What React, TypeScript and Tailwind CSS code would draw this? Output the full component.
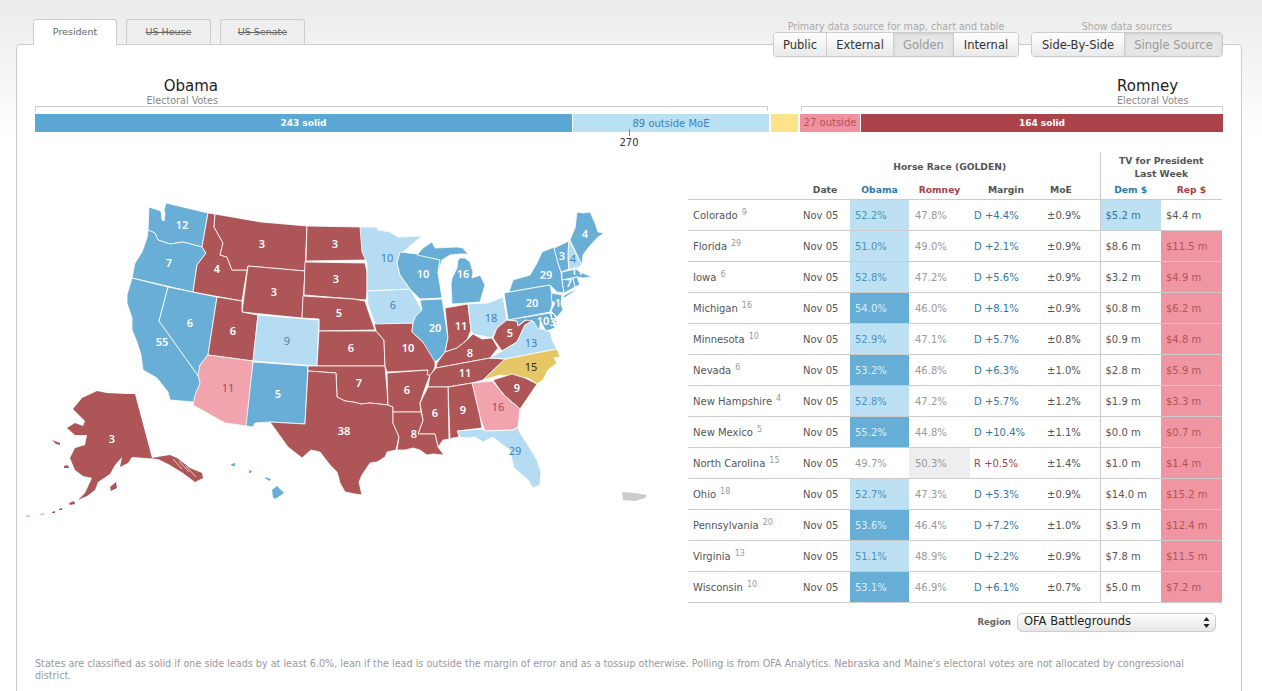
const BLUE = "#68aed6";
const LIGHT = "#b5dcf3";
const RED = "#ae5558";
const PINK = "#f1a3ae";
const GOLD = "#e6c765";

const states: { pts: string; fill: string }[] = [
  { fill: BLUE, pts: "149,207 155,209 161,211 162,220 164,221 165,214 164,210 166,203 208,213 202,247 183,242 170,244 158,240 155,233 148,230" },
  { fill: BLUE, pts: "148,230 155,233 158,240 170,244 183,242 202,247 206,253 197,265 193,292 132,278 135,263 142,252 147,238" },
  { fill: BLUE, pts: "132,278 168,287 159,321 199,377 201,385 196,395 194,402 170,400 168,392 157,378 143,370 141,355 137,342 132,330 132,318 127,303 127,295" },
  { fill: BLUE, pts: "168,287 217,297 208,355 200,365 199,377 159,321" },
  { fill: RED, pts: "208,213 215,214 214,227 223,243 220,255 227,257 232,270 247,270 242,301 193,292 197,265 206,253 202,247" },
  { fill: RED, pts: "215,214 261,222 307,226 305,271 248,266 247,270 232,270 227,257 220,255 223,243 214,227" },
  { fill: RED, pts: "248,266 305,271 302,318 242,312" },
  { fill: RED, pts: "307,226 361,227 366,260 306,261" },
  { fill: RED, pts: "305,262 365,263 367,272 367,292 366,300 353,299 304,295" },
  { fill: RED, pts: "303,296 353,299 365,301 369,313 375,330 319,331 319,319 302,318" },
  { fill: RED, pts: "217,297 242,301 242,312 258,315 253,361 208,355" },
  { fill: LIGHT, pts: "258,315 319,320 317,366 253,361" },
  { fill: RED, pts: "319,331 376,331 384,340 385,366 317,366" },
  { fill: PINK, pts: "208,355 253,361 247,426 225,423 193,405 195,395 200,383 198,375 200,365" },
  { fill: BLUE, pts: "253,362 308,366 305,424 270,422 255,423 253,427 246,426" },
  { fill: RED, pts: "308,366 385,366 387,389 388,405 379,404 370,403 361,404 353,402 345,401 337,397 336,373 308,371" },
  { fill: RED, pts: "308,371 336,373 337,397 345,401 353,402 361,404 370,403 379,404 388,405 393,407 393,423 399,437 396,450 387,452 385,457 377,462 370,463 362,475 359,482 362,495 355,494 345,492 340,483 337,472 330,465 320,452 311,450 302,458 288,447 270,422 305,424" },
  { fill: RED, pts: "387,373 427,370 430,375 425,388 420,403 421,412 393,412 393,407 388,405" },
  { fill: RED, pts: "374,323 413,323 412,332 423,342 435,358 435,367 431,375 427,375 428,370 387,372 385,366 384,340 376,331" },
  { fill: LIGHT, pts: "367,291 410,289 422,310 415,317 413,323 375,324 368,305" },
  { fill: LIGHT, pts: "360,227 377,227 378,230 390,232 398,237 422,236 403,252 400,253 397,263 400,275 410,289 367,291 367,263 362,252" },
  { fill: BLUE, pts: "400,252 417,254 436,259 440,260 438,273 442,298 420,299 410,289 400,275 397,263" },
  { fill: BLUE, pts: "417,255 423,248 432,242 435,248 457,247 463,248 467,253 470,254 460,254 450,255 442,260 438,273 440,260 436,259" },
  { fill: BLUE, pts: "460,258 465,258 470,262 473,272 472,278 478,276 480,275 485,285 480,302 452,304 451,285 452,278 457,268 458,260" },
  { fill: BLUE, pts: "420,300 442,299 443,305 448,338 445,352 440,358 435,362 423,342 412,332 413,323 415,317 422,310" },
  { fill: RED, pts: "445,308 468,304 471,330 467,340 457,348 445,352 448,338" },
  { fill: LIGHT, pts: "468,304 488,303 503,297 507,320 497,328 492,338 473,334 471,330" },
  { fill: RED, pts: "436,368 437,363 445,352 457,348 467,340 473,334 482,339 492,338 498,348 490,358" },
  { fill: RED, pts: "436,368 490,358 505,359 483,380 472,383 448,387 428,387 430,375" },
  { fill: RED, pts: "497,328 507,320 517,321 518,326 530,317 533,321 525,325 517,342 502,351 493,338" },
  { fill: LIGHT, pts: "490,358 502,351 517,342 525,325 532,321 540,328 550,332 553,342 557,349 505,359" },
  { fill: GOLD, pts: "505,359 557,349 560,357 554,358 557,363 548,370 543,380 537,384 528,378 517,377 500,375 483,380" },
  { fill: RED, pts: "493,380 512,374 525,378 537,384 520,409 505,396 500,390" },
  { fill: PINK, pts: "472,383 492,381 505,396 520,409 518,427 513,430 485,431 480,417" },
  { fill: RED, pts: "448,387 472,383 480,417 482,428 458,431 459,437 453,438 450,439" },
  { fill: RED, pts: "428,387 448,387 449,439 443,440 438,447 435,434 418,434 423,420 420,403 425,393" },
  { fill: RED, pts: "393,412 421,412 423,420 418,434 435,434 438,447 444,455 433,454 427,455 420,450 413,448 405,450 397,450 399,437 393,423" },
  { fill: LIGHT, pts: "457,431 482,429 485,431 513,430 518,427 520,433 528,445 537,460 541,472 540,485 533,488 528,480 520,473 514,468 512,460 510,450 500,443 493,437 483,442 475,437 467,438 460,437" },
  { fill: BLUE, pts: "509,292 513,280 530,275 537,263 542,252 554,247 558,263 561,272 562,280 564,293 557,292 550,285" },
  { fill: BLUE, pts: "563,296 578,288 572,293 564,298" },
  { fill: BLUE, pts: "504,293 550,285 552,295 552,305 550,312 508,320" },
  { fill: BLUE, pts: "552,293 562,295 561,304 563,310 557,317 551,311 555,303 551,300" },
  { fill: BLUE, pts: "551,312 555,316 557,325 552,325" },
  { fill: BLUE, pts: "508,320 550,313 555,328 546,331 541,322 539,330 533,321 525,320 518,326 517,321" },
  { fill: BLUE, pts: "554,248 569,241 568,260 569,269 561,272 558,263" },
  { fill: LIGHT, pts: "569,240 582,265 575,269 569,269 568,253" },
  { fill: BLUE, pts: "570,240 575,228 577,212 583,213 590,212 595,223 598,232 604,233 597,238 588,248 583,255 582,265" },
  { fill: BLUE, pts: "562,272 576,269 580,272 585,274 592,277 583,278 577,277 562,280" },
  { fill: BLUE, pts: "562,280 573,278 575,287 564,293" },
  { fill: BLUE, pts: "573,278 577,277 580,285 575,287" },
];

// Alaska and the islands have no state lines around them
const islands: { pts: string; fill: string }[] = [
  { fill: RED, pts: "73,409 82,398 97,391 107,393 127,394 135,394 152,458 157,457 170,455 177,458 190,468 202,473 203,478 195,482 183,473 170,465 158,459 145,458 132,457 128,463 120,467 122,457 115,465 110,474 98,482 95,490 87,496 78,500 85,493 92,478 83,476 75,470 70,458 75,448 85,445 87,435 75,435 67,428 75,423 83,426 85,421" },
  { fill: RED, pts: "110,487 116,482 117,488 111,491" },
  { fill: RED, pts: "64,466 68,465 69,468 64,468" },
  { fill: RED, pts: "52,440 60,443 60,445 56,444" },
  { fill: RED, pts: "69,503 74,501 75,504 70,505" },
  { fill: RED, pts: "59,509 62,508 62,510 59,510" },
  { fill: RED, pts: "52,512 55,511 55,513 52,513" },
  { fill: "#e3bcbd", pts: "40,514 44,513 44,515 40,515" },
  { fill: "#e3bcbd", pts: "26,516 30,515 30,517 26,517" },
  { fill: BLUE, pts: "231,464 235,463 235,466 232,466" },
  { fill: BLUE, pts: "249,470 252,471 251,473 249,473" },
  { fill: BLUE, pts: "265,477 271,479 270,481 266,479" },
  { fill: BLUE, pts: "272,490 277,486 284,493 275,499 273,497" },
  { fill: "#cccccc", pts: "622,492 635,493 647,495 645,498 635,501 623,500" },
];

const labels: { t: string; x: number; y: number; c?: string }[] = [
  { t: "12", x: 182, y: 225 }, { t: "7", x: 169, y: 263 }, { t: "55", x: 162, y: 342 },
  { t: "6", x: 190, y: 323 }, { t: "4", x: 217, y: 269 }, { t: "3", x: 262, y: 244 },
  { t: "3", x: 274, y: 292 }, { t: "6", x: 233, y: 331 }, { t: "11", x: 228, y: 388, c: "#a04e58" },
  { t: "9", x: 287, y: 341, c: "#3f82b2" }, { t: "5", x: 278, y: 394 }, { t: "3", x: 335, y: 244 },
  { t: "3", x: 336, y: 279 }, { t: "5", x: 339, y: 313 }, { t: "6", x: 351, y: 348 },
  { t: "7", x: 359, y: 383 }, { t: "38", x: 344, y: 431 }, { t: "10", x: 408, y: 348 },
  { t: "6", x: 407, y: 390 }, { t: "8", x: 414, y: 434 }, { t: "6", x: 435, y: 413 },
  { t: "9", x: 463, y: 410 }, { t: "16", x: 498, y: 407, c: "#a04e58" }, { t: "29", x: 515, y: 451, c: "#3f82b2" },
  { t: "9", x: 517, y: 388 }, { t: "15", x: 531, y: 367, c: "#3a2a10" }, { t: "11", x: 465, y: 373 },
  { t: "8", x: 470, y: 353 }, { t: "11", x: 461, y: 326 }, { t: "20", x: 435, y: 328 },
  { t: "6", x: 393, y: 305, c: "#3f82b2" }, { t: "10", x: 387, y: 258, c: "#3f82b2" }, { t: "10", x: 423, y: 274 },
  { t: "16", x: 463, y: 274 }, { t: "18", x: 491, y: 318, c: "#3f82b2" }, { t: "5", x: 510, y: 333 },
  { t: "13", x: 531, y: 343, c: "#3f82b2" }, { t: "20", x: 532, y: 303 }, { t: "29", x: 546, y: 275 },
  { t: "3", x: 562, y: 256 }, { t: "4", x: 573, y: 259, c: "#3f82b2" }, { t: "4", x: 585, y: 234 },
  { t: "11", x: 577, y: 271 }, { t: "7", x: 569, y: 283 }, { t: "4", x: 581, y: 285 },
  { t: "14", x: 561, y: 303 }, { t: "10", x: 543, y: 321 }, { t: "3", x: 553, y: 322 },
  { t: "3", x: 112, y: 439 },
];

type Row = {
  state: string;
  ev: string;
  dark?: boolean;
  obama: string;
  romney: string;
  margin: string;
  moe: string;
  dem: string;
  rep: string;
};

const rows: Row[] = [
  { state: "Colorado", ev: "9", obama: "52.2%", romney: "47.8%", margin: "D +4.4%", moe: "±0.9%", dem: "$5.2 m", rep: "$4.4 m" },
  { state: "Florida", ev: "29", obama: "51.0%", romney: "49.0%", margin: "D +2.1%", moe: "±0.9%", dem: "$8.6 m", rep: "$11.5 m" },
  { state: "Iowa", ev: "6", obama: "52.8%", romney: "47.2%", margin: "D +5.6%", moe: "±0.9%", dem: "$3.2 m", rep: "$4.9 m" },
  { state: "Michigan", ev: "16", dark: true, obama: "54.0%", romney: "46.0%", margin: "D +8.1%", moe: "±0.9%", dem: "$0.8 m", rep: "$6.2 m" },
  { state: "Minnesota", ev: "10", obama: "52.9%", romney: "47.1%", margin: "D +5.7%", moe: "±0.8%", dem: "$0.9 m", rep: "$4.8 m" },
  { state: "Nevada", ev: "6", dark: true, obama: "53.2%", romney: "46.8%", margin: "D +6.3%", moe: "±1.0%", dem: "$2.8 m", rep: "$5.9 m" },
  { state: "New Hampshire", ev: "4", obama: "52.8%", romney: "47.2%", margin: "D +5.7%", moe: "±1.2%", dem: "$1.9 m", rep: "$3.3 m" },
  { state: "New Mexico", ev: "5", dark: true, obama: "55.2%", romney: "44.8%", margin: "D +10.4%", moe: "±1.1%", dem: "$0.0 m", rep: "$0.7 m" },
  { state: "North Carolina", ev: "15", obama: "49.7%", romney: "50.3%", margin: "R +0.5%", moe: "±1.4%", dem: "$1.0 m", rep: "$1.4 m" },
  { state: "Ohio", ev: "18", obama: "52.7%", romney: "47.3%", margin: "D +5.3%", moe: "±0.9%", dem: "$14.0 m", rep: "$15.2 m" },
  { state: "Pennsylvania", ev: "20", dark: true, obama: "53.6%", romney: "46.4%", margin: "D +7.2%", moe: "±1.0%", dem: "$3.9 m", rep: "$12.4 m" },
  { state: "Virginia", ev: "13", obama: "51.1%", romney: "48.9%", margin: "D +2.2%", moe: "±0.9%", dem: "$7.8 m", rep: "$11.5 m" },
  { state: "Wisconsin", ev: "10", dark: true, obama: "53.1%", romney: "46.9%", margin: "D +6.1%", moe: "±0.7%", dem: "$5.0 m", rep: "$7.2 m" },
];

function UsMap() {
  return (
    <svg width="640" height="330" viewBox="26 200 640 330" className="mt-[48px] block shrink-0">
      {states.map((s, i) => (
        <polygon key={i} points={s.pts} fill={s.fill} stroke="#ffffff" strokeWidth="0.8" strokeLinejoin="round" />
      ))}
      {islands.map((s, i) => (
        <polygon key={i} points={s.pts} fill={s.fill} />
      ))}
      <g stroke="#ffffff" strokeWidth="0.7">
        <line x1="173" y1="459" x2="182" y2="469" />
        <line x1="179" y1="461" x2="189" y2="472" />
        <line x1="186" y1="466" x2="196" y2="477" />
      </g>
      {labels.map((l, i) => (
        <text
          key={i}
          x={l.x}
          y={l.y + 4}
          textAnchor="middle"
          fill={l.c ?? "#ffffff"}
          fontFamily="'Noto Sans', sans-serif"
          fontSize="11"
          fontWeight={l.c ? 400 : 600}
        >
          {l.t}
        </text>
      ))}
    </svg>
  );
}

function Tab({ label, active }: { label: string; active?: boolean }) {
  if (active) {
    return (
      <div className="relative z-10 -mb-px flex h-[26px] w-[84px] items-center justify-center rounded-t-[3px] border border-b-0 border-[#ccc] bg-white text-[9.5px] text-[#666]">
        {label}
      </div>
    );
  }
  return (
    <div className="flex h-[25px] w-[85px] items-center justify-center rounded-t-[3px] border border-b-0 border-[#ccc] bg-[#eeeeee] text-[9.5px] text-[#666] line-through">
      {label}
    </div>
  );
}

function Segmented({ title, items }: { title: string; items: { label: string; w: string; active?: boolean }[] }) {
  return (
    <div className="flex flex-col items-center">
      <div className="pt-px text-[9.6px] leading-[11px] text-[#aaa]">{title}</div>
      <div className="flex h-[25px] overflow-hidden rounded-[4px] border border-[#ccc] text-[11.5px] shadow-[0_1px_1px_rgba(0,0,0,0.05)]">
        {items.map((it) => (
          <div
            key={it.label}
            className={`flex items-center justify-center border-r border-[#ccc] pt-[2px] last:border-r-0 ${it.w} ${
              it.active
                ? "bg-[#e6e6e6] text-[#999] shadow-[inset_0_1px_3px_rgba(0,0,0,0.12)]"
                : "bg-gradient-to-b from-white to-[#e9e9e9] text-[#333]"
            }`}
          >
            {it.label}
          </div>
        ))}
      </div>
    </div>
  );
}

function RaceTable() {
  return (
    <table className="w-[534px] shrink-0 table-fixed border-collapse text-[10px] text-[#555]">
      <colgroup>
        <col className="w-[112px]" />
        <col className="w-[50px]" />
        <col className="w-[59px]" />
        <col className="w-[61px]" />
        <col className="w-[72px]" />
        <col className="w-[58px]" />
        <col className="w-[61px]" />
        <col className="w-[61px]" />
      </colgroup>
      <thead className="text-[9.2px]">
        <tr className="h-[29px]">
          <th />
          <th colSpan={5} className="text-center font-bold text-[#555]">
            Horse Race (GOLDEN)
          </th>
          <th colSpan={2} className="border-l border-[#ccc] text-center font-bold leading-[13px] text-[#555]">
            TV for President
            <br />
            Last Week
          </th>
        </tr>
        <tr className="h-[18px] border-b border-[#ccc] font-bold">
          <th />
          <th className="pt-px text-center font-bold text-[#555]">Date</th>
          <th className="pt-px text-center font-bold text-[#2f78a8]">Obama</th>
          <th className="pt-px text-center font-bold text-[#a6404a]">Romney</th>
          <th className="pt-px text-center font-bold text-[#555]">Margin</th>
          <th className="pl-[8px] pt-px text-left font-bold text-[#555]">MoE</th>
          <th className="border-l border-[#ccc] pt-px text-center font-bold text-[#2f78a8]">Dem $</th>
          <th className="pt-px text-center font-bold text-[#a6404a]">Rep $</th>
        </tr>
      </thead>
      <tbody>
        {rows.map((r) => {
          const tossup = r.state === "North Carolina";
          const demWin = r.state === "Colorado";
          return (
            <tr key={r.state} className="h-[31px] border-b border-[#ccc]">
              <td className="whitespace-nowrap pl-[5px] pt-[1px]">
                {r.state}
                <sup className="ml-[4px] text-[8px] text-[#999]">{r.ev}</sup>
              </td>
              <td className="pl-[3px] pt-[1px]">Nov 05</td>
              <td
                className={`pl-[5px] pt-[1px] ${
                  tossup
                    ? "text-[#999]"
                    : r.dark
                      ? "bg-[#67aed6] text-[#dceefa]"
                      : "bg-[#bde0f2] text-[#4a93c0]"
                }`}
              >
                {r.obama}
              </td>
              <td className={`pl-[6px] pt-[1px] text-[#999] ${tossup ? "bg-[#eeeeee]" : ""}`}>{r.romney}</td>
              <td className={`pl-[4px] pt-[1px] ${tossup ? "text-[#a6404a]" : "text-[#2f78a8]"}`}>{r.margin}</td>
              <td className="pl-[5px] pt-[1px]">{r.moe}</td>
              <td className={`border-l border-[#ccc] pl-[5px] pt-[1px] ${demWin ? "bg-[#bde0f2] text-[#2f78a8]" : ""}`}>{r.dem}</td>
              <td className={`pl-[5px] pt-[1px] ${demWin ? "" : "bg-[#f096a2] text-[#b4525c]"}`}>{r.rep}</td>
            </tr>
          );
        })}
      </tbody>
    </table>
  );
}

export default function App() {
  return (
    <div className="h-[691px] w-[1262px] overflow-hidden bg-[linear-gradient(#ebebeb,#ffffff_140px)] font-['DejaVu_Sans',sans-serif] text-[10px]">
      <div className="flex h-[44px] items-start justify-between pl-[33px] pr-[39px] pt-[19px]">
        <div className="flex gap-[9px]">
          <Tab label="President" active />
          <Tab label="US House" />
          <Tab label="US Senate" />
        </div>
        <div className="relative z-10 mt-[1px] flex gap-[12px]">
          <Segmented
            title="Primary data source for map, chart and table"
            items={[
              { label: "Public", w: "w-[53px]" },
              { label: "External", w: "w-[67px]" },
              { label: "Golden", w: "w-[60px]", active: true },
              { label: "Internal", w: "w-[64px]" },
            ]}
          />
          <Segmented
            title="Show data sources"
            items={[
              { label: "Side-By-Side", w: "w-[93px]" },
              { label: "Single Source", w: "w-[97px]", active: true },
            ]}
          />
        </div>
      </div>
      <div className="ml-[16px] h-[660px] w-[1226px] rounded-[4px] border border-[#ccc] bg-white px-[18px]">
        <div className="flex justify-between pt-[32px]">
          <div className="w-[183px] text-right">
            <div className="text-[15px] leading-[18px] text-[#222]">Obama</div>
            <div className="text-[9.6px] leading-[11px] text-[#888]">Electoral Votes</div>
          </div>
          <div className="w-[106px] text-left">
            <div className="text-[15px] leading-[18px] text-[#222]">Romney</div>
            <div className="text-[9.6px] leading-[11px] text-[#888]">Electoral Votes</div>
          </div>
        </div>
        <div className="flex h-[5px] justify-between pt-0">
          <div className="h-[5px] w-[733px] border-x border-t border-[#ccc]" />
          <div className="h-[5px] w-[422px] border-x border-t border-[#ccc]" />
        </div>
        <div className="mt-[3px] flex h-[18px] text-center text-[9px] font-bold text-white">
          <div className="w-[537px] bg-[#5ba8d4] leading-[19px]">243 solid</div>
          <div className="ml-px w-[196px] bg-[#bae0f4] text-[10px] font-normal leading-[19px] text-[#3f82b2]">89 outside MoE</div>
          <div className="ml-[2px] w-[27px] bg-[#ffe38a]" />
          <div className="ml-[2px] h-[18px] w-[60px] overflow-hidden bg-[#f0919f] pt-[2px] text-[10px] font-normal leading-[14px] text-[#b4525c]">27 outside MoE</div>
          <div className="ml-px w-[362px] bg-[#ab444a] leading-[19px]">164 solid</div>
        </div>
        <div className="relative ml-[579px] -mt-[3px] flex w-[30px] flex-col items-center">
          <div className="h-[7px] w-px bg-[#888]" />
          <div className="leading-[14px] text-[#333]">270</div>
        </div>
        <div className="mt-[2px] -ml-[9px] flex items-start justify-between pr-px">
          <UsMap />
          <div className="flex w-[534px] shrink-0 flex-col">
            <RaceTable />
            <div className="mt-[10px] flex items-center justify-end gap-[6px] pr-[6px]">
              <span className="text-[8.6px] font-bold text-[#666]">Region</span>
              <div className="flex h-[19px] w-[199px] items-center justify-between rounded-[5px] border border-[#ccc] bg-gradient-to-b from-white via-[#f2f2f2] to-[#e6e6e6] pl-[6px] pr-[5px] text-[11.5px] text-[#222]">
                <span>OFA Battlegrounds</span>
                <svg width="7" height="11" viewBox="0 0 7 11">
                  <path d="M3.5 0 L6.5 4 L0.5 4 Z M3.5 11 L0.5 7 L6.5 7 Z" fill="#222" />
                </svg>
              </div>
            </div>
          </div>
        </div>
        <p className="mt-[26px] w-[1170px] text-[9.65px] leading-[12px] text-[#999]">
          States are classified as solid if one side leads by at least 6.0%, lean if the lead is outside the margin of error and as a tossup otherwise. Polling is from OFA Analytics. Nebraska and Maine&apos;s electoral votes are not allocated by congressional district.
        </p>
      </div>
    </div>
  );
}
